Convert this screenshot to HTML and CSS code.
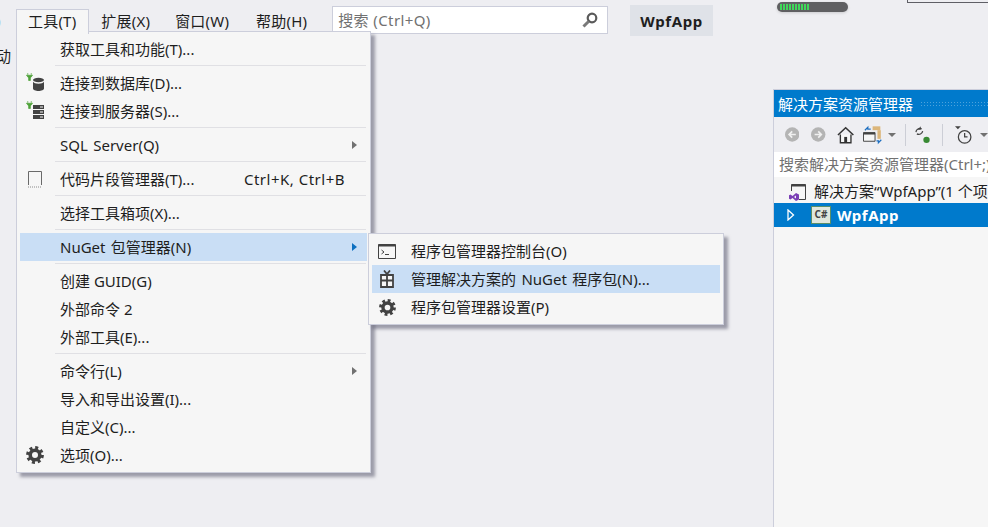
FILE: index.html
```html
<!DOCTYPE html>
<html lang="zh">
<head>
<meta charset="utf-8">
<title>WpfApp</title>
<link rel="stylesheet" href="styles.css">
</head>
<body>
<svg class="defs" width="0" height="0">
	<symbol id="gear" viewBox="0 0 18 18">
		<circle cx="9" cy="9" r="7.2" fill="none" stroke="#424242" stroke-width="3.4" stroke-dasharray="2.9 2.75"/>
		<circle cx="9" cy="9" r="4.8" fill="none" stroke="#424242" stroke-width="3.6"/>
	</symbol>
	<symbol id="plug" viewBox="0 0 8 9">
		<path d="M2 0v2M6 0v2M0.500 2.500h7L5 5.500v3H3v-3z" fill="#4fa33a" stroke="#4fa33a" stroke-width="0.800"/>
	</symbol>
</svg>

<div class="window">
	<div class="main">
		<nav class="menubar">
			<span class="menu-clip">)</span>
			<span class="menu-title active">工具(T)</span>
			<span class="menu-title">扩展(X)</span>
			<span class="menu-title">窗口(W)</span>
			<span class="menu-title help">帮助(H)</span>
			<div class="quick-search">
				<span>搜索 (Ctrl+Q)</span>
				<svg width="18" height="18" viewBox="0 0 18 18">
					<circle cx="11" cy="7" r="4.300" fill="none" stroke="#5a5a5a" stroke-width="2.200"/>
					<path d="M7.800 10.200L2.500 15.500" stroke="#7a7a7a" stroke-width="3"/>
				</svg>
			</div>
			<span class="project-name">WpfApp</span>
		</nav>
		<div class="toolbar-clip">动</div>

		<div class="menu tools-menu">
			<div class="row"><i class="ico"></i><span class="label">获取工具和功能(T)...</span></div>
			<div class="sep"></div>
			<div class="row">
				<i class="ico">
					<svg width="22" height="22" viewBox="0 0 22 22">
						<use href="#plug" x="2" y="1" width="7" height="8"/>
						<ellipse cx="14.500" cy="8" rx="5.500" ry="2.200" fill="#424242"/>
						<path d="M9 9.500v7c0 3.300 11 3.300 11 0v-7c-1 3-10 3-11 0z" fill="#424242"/>
					</svg>
				</i>
				<span class="label">连接到数据库(D)...</span>
			</div>
			<div class="row">
				<i class="ico">
					<svg width="22" height="22" viewBox="0 0 22 22">
						<use href="#plug" x="2" y="1" width="7" height="8"/>
						<path d="M9 5h11v4H9zM9 10h11v4H9zM9 15h11v4H9z" fill="#424242"/>
						<path d="M16 7h3M16 12h3M16 17h3" stroke="#f6f6f6"/>
					</svg>
				</i>
				<span class="label">连接到服务器(S)...</span>
			</div>
			<div class="sep"></div>
			<div class="row"><i class="ico"></i><span class="label wide">SQL Server(Q)</span><b class="arrow"></b></div>
			<div class="sep"></div>
			<div class="row">
				<i class="ico">
					<svg width="16" height="18" viewBox="0 0 16 18">
						<path d="M1.500 15V1.500h13V15" fill="none" stroke="#6a6a6a"/>
						<path d="M1 17h14" stroke="#8a8a8a" stroke-dasharray="1 1"/>
					</svg>
				</i>
				<span class="label">代码片段管理器(T)...</span>
				<span class="shortcut">Ctrl+K, Ctrl+B</span>
			</div>
			<div class="sep"></div>
			<div class="row"><i class="ico"></i><span class="label">选择工具箱项(X)...</span></div>
			<div class="sep"></div>
			<div class="row open"><i class="ico"></i><span class="label wide">NuGet 包管理器(N)</span><b class="arrow"></b></div>
			<div class="sep"></div>
			<div class="row"><i class="ico"></i><span class="label">创建 GUID(G)</span></div>
			<div class="row"><i class="ico"></i><span class="label">外部命令 2</span></div>
			<div class="row"><i class="ico"></i><span class="label">外部工具(E)...</span></div>
			<div class="sep"></div>
			<div class="row"><i class="ico"></i><span class="label">命令行(L)</span><b class="arrow"></b></div>
			<div class="row"><i class="ico"></i><span class="label">导入和导出设置(I)...</span></div>
			<div class="row"><i class="ico"></i><span class="label">自定义(C)...</span></div>
			<div class="row">
				<i class="ico"><svg width="18" height="18"><use href="#gear"/></svg></i>
				<span class="label">选项(O)...</span>
			</div>
		</div>

		<div class="menu nuget-menu">
			<div class="row">
				<i class="ico">
					<svg width="18" height="15" viewBox="0 0 18 15">
						<path d="M0.500 0.500h17v14H0.500z" fill="none" stroke="#424242"/>
						<path d="M0.500 0.500h17v2h-17z" fill="#424242"/>
						<path d="M3.500 6l2.500 2-2.500 2M7 10.500h4" fill="none" stroke="#424242"/>
					</svg>
				</i>
				<span class="label">程序包管理器控制台(O)</span>
			</div>
			<div class="row selected">
				<i class="ico">
					<svg width="14" height="18" viewBox="0 0 14 18">
						<path d="M1 5h12v12H1zM1 10.500h12M7 5v12" fill="#f6f6f6" stroke="#424242" stroke-width="1.800"/>
						<path d="M4 0.500L7 4l3-3.500" fill="none" stroke="#424242" stroke-width="1.800"/>
					</svg>
				</i>
				<span class="label wide">管理解决方案的 NuGet 程序包(N)...</span>
			</div>
			<div class="row">
				<i class="ico"><svg width="17" height="17"><use href="#gear"/></svg></i>
				<span class="label">程序包管理器设置(P)</span>
			</div>
		</div>
	</div>

	<aside class="side">
		<div class="side-top">
			<div class="meter"><div class="meter-fill"></div></div>
			<div class="frame-edge"></div>
		</div>
		<section class="panel">
			<header class="panel-title"><span>解决方案资源管理器</span><div class="gripper"></div></header>
			<div class="panel-tools">
				<svg width="15" height="15" viewBox="0 0 14 14"><circle cx="7" cy="7" r="7" fill="#b4b4b4"/><path d="M10.500 7h-6M7 4L4 7l3 3" fill="none" stroke="#f0f0f0" stroke-width="1.600"/></svg>
				<svg class="fwd" width="15" height="15" viewBox="0 0 14 14"><circle cx="7" cy="7" r="7" fill="#b4b4b4"/><path d="M3.500 7h6M7 4l3 3-3 3" fill="none" stroke="#f0f0f0" stroke-width="1.600"/></svg>
				<svg class="home" width="18" height="18" viewBox="0 0 18 18"><path d="M1 9l8-7.500L17 9" fill="none" stroke="#333" stroke-width="1.600"/><path d="M3.500 8.500v8.500h11V8.500" fill="#f6f6f6" stroke="#333" stroke-width="1.400"/><path d="M7.500 11h3v6h-3z" fill="#333"/></svg>
				<svg class="sync" width="20" height="20" viewBox="0 0 20 20"><path d="M10 5V1h8v4z" fill="#dcb67a"/><path d="M15 5h3.500v9H15z" fill="#dcb67a"/><path d="M0.500 7.500h12v9h-12z" fill="#f6f6f6" stroke="#424242"/><path d="M0.500 7.500h12v2h-12z" fill="#424242"/><path d="M2 5l3-3v2h3" fill="none" stroke="#1e6fc0" stroke-width="1.300"/><path d="M19 15l-3 3v-2h-2" fill="none" stroke="#1e6fc0" stroke-width="1.300"/></svg>
				<b class="caret"></b>
				<i class="tool-sep"></i>
				<svg class="refresh" width="18" height="20" viewBox="0 0 18 20"><path d="M2 7a4 4 0 0 1 6-3.200M9 6a4 4 0 0 1-6 2.800" fill="none" stroke="#424242" stroke-width="1.300"/><path d="M7 1v3.500h-3z" fill="#424242"/><circle cx="13" cy="15" r="3.300" fill="#388a34"/></svg>
				<i class="tool-sep"></i>
				<svg class="clock" width="20" height="20" viewBox="0 0 20 20"><path d="M0 1h6L3 4z" fill="#424242"/><circle cx="10" cy="12" r="6.500" fill="none" stroke="#424242" stroke-width="1.300"/><path d="M10 8v4h3" fill="none" stroke="#424242" stroke-width="1.300"/></svg>
				<b class="caret"></b>
			</div>
			<div class="panel-search">搜索解决方案资源管理器(Ctrl+;)</div>
			<div class="tree">
				<div class="tree-row">
					<svg width="18" height="20" viewBox="0 0 18 20"><path d="M2.500 10V3.500h14v15H10" fill="none" stroke="#424242"/><path d="M2.500 3.500h14v2h-14z" fill="#424242"/><path d="M7 12l3 1.500v5L7 20l-3.500-3L1.500 18.500 0 17.700v-3.400L1.500 13.500 3.500 15z" fill="#7b3fb5"/><path d="M7 14.500v3L5 16z" fill="#f6f6f6"/></svg>
					<span>解决方案“WpfApp”(1 个项目)</span>
				</div>
				<div class="tree-row project">
					<svg class="twisty" width="8" height="12" viewBox="0 0 8 12"><path d="M1 1l5.500 5L1 11z" fill="none" stroke="#fff" stroke-width="1.300"/></svg>
					<span class="cs-icon">C#</span>
					<span class="project-label">WpfApp</span>
				</div>
			</div>
		</section>
	</aside>
</div>
</body>
</html>
```

FILE: styles.css
```css
html, body {
	margin: 0;
	height: 100%;
	overflow: hidden;
}

body {
	background: #eeeef2;
	color: #1e1e1e;
	font: 15px/20px "Noto Sans", "Noto Sans CJK SC", sans-serif;
}

.defs {
	position: absolute;
}

.window {
	display: flex;
	height: 527px;
}

.main {
	position: relative;
	width: 773px;
	flex: none;
}

.menubar {
	display: flex;
	align-items: flex-start;
	padding-top: 5px;
	height: 27px;
}

.menu-clip {
	width: 16px;
	margin-top: 5px;
	text-indent: -4px;
	overflow: hidden;
}

.menu-title {
	margin-top: 4px;
	padding: 1px 12px 0 11px;
	height: 22px;
	border: 1px solid transparent;
	border-bottom: 0;
	letter-spacing: 0.2px;
	white-space: nowrap;
}

.menu-title.help {
	margin-left: 2px;
}

.menu-title.active {
	position: relative;
	z-index: 3;
	height: 23px;
	background: #f6f6f6;
	border-color: #cccedb;
}

.quick-search {
	display: flex;
	justify-content: space-between;
	align-items: center;
	box-sizing: border-box;
	flex: none;
	width: 276px;
	height: 28px;
	margin: 1px 0 0 12px;
	padding: 0 8px 0 5px;
	background: #fff;
	border: 1px solid #cccedb;
	color: #717171;
	letter-spacing: 0.4px;
}

.project-name {
	margin-left: 22px;
	padding: 6px 10px 5px;
	background: #dfe2e8;
	font-weight: 700;
	letter-spacing: 0.6px;
}

.toolbar-clip {
	margin: 14px 0 0 -4px;
}

.menu {
	position: absolute;
	box-sizing: border-box;
	background: #f6f6f6;
	border: 1px solid #cccedb;
	box-shadow: 4px 4px 3px rgba(90, 90, 110, 0.55);
	padding: 3px;
}

.tools-menu {
	z-index: 2;
	left: 16px;
	top: 31px;
	width: 355px;
	height: 442px;
}

.nuget-menu {
	z-index: 4;
	left: 368px;
	top: 233px;
	width: 356px;
	height: 92px;
}

.row {
	display: flex;
	align-items: center;
	height: 28px;
	white-space: nowrap;
}

.ico {
	display: flex;
	justify-content: center;
	align-items: center;
	flex: none;
	width: 40px;
	padding-right: 10px;
	box-sizing: border-box;
}

.label {
	flex: 1;
}

.wide {
	word-spacing: 1.500px;
}

.shortcut {
	margin-right: 22px;
	letter-spacing: 0.5px;
}

.arrow {
	width: 0;
	height: 0;
	margin-right: 10px;
	border-left: 5px solid #717171;
	border-top: 4.500px solid transparent;
	border-bottom: 4.500px solid transparent;
}

.open, .selected {
	background: #c9def5;
}

.open .arrow {
	border-left-color: #0e70c0;
}

.sep {
	height: 1px;
	margin: 2px 1px 3px 35px;
	background: #e0e0e4;
}

.nuget-menu .ico {
	width: 39px;
	padding-right: 9px;
}

/* right hand tool window */
.side {
	flex: 1;
	min-width: 0;
	display: flex;
	flex-direction: column;
}

.side-top {
	display: flex;
	height: 89px;
}

.meter {
	width: 71px;
	height: 10px;
	margin: 2px 0 0 4px;
	padding: 2px 3px;
	box-sizing: border-box;
	background: #5f5f62;
	border-radius: 5px;
	box-shadow: 0 1px 3px rgba(0, 0, 0, 0.15);
}

.meter-fill {
	width: 29px;
	height: 6px;
	background: repeating-linear-gradient(90deg, #3fd85a 0 2px, #5f5f62 2px 3px);
}

.frame-edge {
	flex: 1;
	height: 1px;
	margin-left: 59px;
	padding-top: 1px;
	border-left: 1px solid #5f5f66;
	border-bottom: 1px solid #5f5f66;
}

.panel {
	flex: 1;
	min-height: 0;
	overflow: hidden;
	background: #f6f6f6;
	border-left: 1px solid #cccedb;
	border-top: 1px solid #cccedb;
}

.panel-title {
	display: flex;
	align-items: center;
	height: 27px;
	padding-left: 4px;
	background: #007acc;
	color: #fff;
	white-space: nowrap;
}

.gripper {
	flex: 1;
	height: 6px;
	margin-left: 7px;
	background-image: radial-gradient(#4da2dc 0.8px, transparent 0.9px);
	background-size: 3px 3px;
}

.panel-tools {
	display: flex;
	align-items: center;
	height: 35px;
	padding-left: 11px;
	background: #eeeef2;
	white-space: nowrap;
}

.fwd {
	margin-left: 12px;
}

.home {
	margin-left: 11px;
}

.sync {
	margin-left: 9px;
}

.caret {
	width: 0;
	height: 0;
	margin-left: 6px;
	border-top: 4px solid #717171;
	border-left: 4px solid transparent;
	border-right: 4px solid transparent;
}

.tool-sep {
	width: 1px;
	height: 22px;
	margin: 0 8px 0 9px;
	background: #ccced6;
}

.refresh {
	margin-right: 1px;
}

.clock {
	margin-left: 4px;
}

.panel-search {
	height: 25px;
	padding-left: 5px;
	background: #fff;
	color: #717171;
	line-height: 25px;
	white-space: nowrap;
}

.tree {
	padding-top: 2px;
}

.tree-row {
	display: flex;
	align-items: center;
	height: 24px;
	padding-left: 15px;
	gap: 7px;
	white-space: nowrap;
}

.tree-row svg {
	flex: none;
}

.project {
	padding-left: 13px;
	gap: 6px;
	background: #007acc;
	color: #fff;
	font-weight: 700;
}

.twisty {
	margin-right: 10px;
}

.cs-icon {
	flex: none;
	width: 20px;
	height: 18px;
	box-sizing: border-box;
	border: 1px solid #5b8f68;
	background: #e0e7dd;
	color: #444;
	font-size: 10px;
	line-height: 15px;
	text-align: center;
}

.project-label {
	letter-spacing: 0.5px;
}
```
